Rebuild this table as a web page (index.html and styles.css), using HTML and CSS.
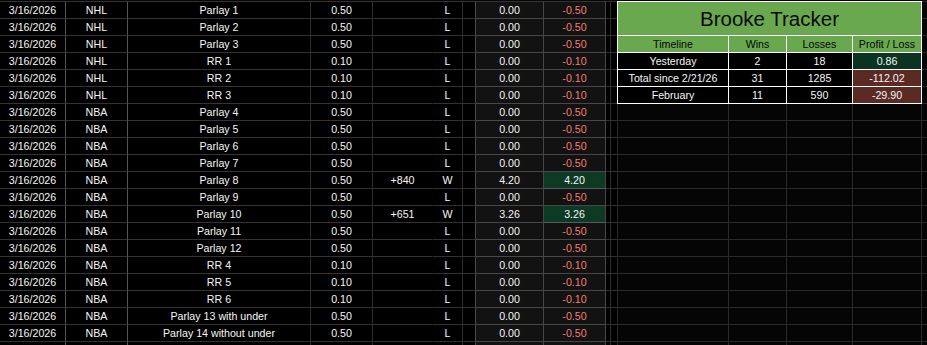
FILE: index.html
```html
<!DOCTYPE html>
<html>
<head>
<meta charset="utf-8">
<link rel="stylesheet" href="styles.css">
</head>
<body>
<div class="sheet">
  <div class="main">
    <div class="row"><div class="c date">3/16/2026</div><div class="c lg">NHL</div><div class="c bet">Parlay 1</div><div class="c stk">0.50</div><div class="c odd"></div><div class="c res">L</div><div class="c sp"></div><div class="c ret">0.00</div><div class="c pl neg">-0.50</div><div class="c e1"></div><div class="c e2"></div></div>
    <div class="row"><div class="c date">3/16/2026</div><div class="c lg">NHL</div><div class="c bet">Parlay 2</div><div class="c stk">0.50</div><div class="c odd"></div><div class="c res">L</div><div class="c sp"></div><div class="c ret">0.00</div><div class="c pl neg">-0.50</div><div class="c e1"></div><div class="c e2"></div></div>
    <div class="row"><div class="c date">3/16/2026</div><div class="c lg">NHL</div><div class="c bet">Parlay 3</div><div class="c stk">0.50</div><div class="c odd"></div><div class="c res">L</div><div class="c sp"></div><div class="c ret">0.00</div><div class="c pl neg">-0.50</div><div class="c e1"></div><div class="c e2"></div></div>
    <div class="row"><div class="c date">3/16/2026</div><div class="c lg">NHL</div><div class="c bet">RR 1</div><div class="c stk">0.10</div><div class="c odd"></div><div class="c res">L</div><div class="c sp"></div><div class="c ret">0.00</div><div class="c pl neg">-0.10</div><div class="c e1"></div><div class="c e2"></div></div>
    <div class="row"><div class="c date">3/16/2026</div><div class="c lg">NHL</div><div class="c bet">RR 2</div><div class="c stk">0.10</div><div class="c odd"></div><div class="c res">L</div><div class="c sp"></div><div class="c ret">0.00</div><div class="c pl neg">-0.10</div><div class="c e1"></div><div class="c e2"></div></div>
    <div class="row"><div class="c date">3/16/2026</div><div class="c lg">NHL</div><div class="c bet">RR 3</div><div class="c stk">0.10</div><div class="c odd"></div><div class="c res">L</div><div class="c sp"></div><div class="c ret">0.00</div><div class="c pl neg">-0.10</div><div class="c e1"></div><div class="c e2"></div></div>
    <div class="row"><div class="c date">3/16/2026</div><div class="c lg">NBA</div><div class="c bet">Parlay 4</div><div class="c stk">0.50</div><div class="c odd"></div><div class="c res">L</div><div class="c sp"></div><div class="c ret">0.00</div><div class="c pl neg">-0.50</div><div class="c e1"></div><div class="c e2"></div></div>
    <div class="row"><div class="c date">3/16/2026</div><div class="c lg">NBA</div><div class="c bet">Parlay 5</div><div class="c stk">0.50</div><div class="c odd"></div><div class="c res">L</div><div class="c sp"></div><div class="c ret">0.00</div><div class="c pl neg">-0.50</div><div class="c e1"></div><div class="c e2"></div></div>
    <div class="row"><div class="c date">3/16/2026</div><div class="c lg">NBA</div><div class="c bet">Parlay 6</div><div class="c stk">0.50</div><div class="c odd"></div><div class="c res">L</div><div class="c sp"></div><div class="c ret">0.00</div><div class="c pl neg">-0.50</div><div class="c e1"></div><div class="c e2"></div></div>
    <div class="row"><div class="c date">3/16/2026</div><div class="c lg">NBA</div><div class="c bet">Parlay 7</div><div class="c stk">0.50</div><div class="c odd"></div><div class="c res">L</div><div class="c sp"></div><div class="c ret">0.00</div><div class="c pl neg">-0.50</div><div class="c e1"></div><div class="c e2"></div></div>
    <div class="row"><div class="c date">3/16/2026</div><div class="c lg">NBA</div><div class="c bet">Parlay 8</div><div class="c stk">0.50</div><div class="c odd">+840</div><div class="c res">W</div><div class="c sp"></div><div class="c ret">4.20</div><div class="c pl win">4.20</div><div class="c e1"></div><div class="c e2"></div></div>
    <div class="row"><div class="c date">3/16/2026</div><div class="c lg">NBA</div><div class="c bet">Parlay 9</div><div class="c stk">0.50</div><div class="c odd"></div><div class="c res">L</div><div class="c sp"></div><div class="c ret">0.00</div><div class="c pl neg">-0.50</div><div class="c e1"></div><div class="c e2"></div></div>
    <div class="row"><div class="c date">3/16/2026</div><div class="c lg">NBA</div><div class="c bet">Parlay 10</div><div class="c stk">0.50</div><div class="c odd">+651</div><div class="c res">W</div><div class="c sp"></div><div class="c ret">3.26</div><div class="c pl win">3.26</div><div class="c e1"></div><div class="c e2"></div></div>
    <div class="row"><div class="c date">3/16/2026</div><div class="c lg">NBA</div><div class="c bet">Parlay 11</div><div class="c stk">0.50</div><div class="c odd"></div><div class="c res">L</div><div class="c sp"></div><div class="c ret">0.00</div><div class="c pl neg">-0.50</div><div class="c e1"></div><div class="c e2"></div></div>
    <div class="row"><div class="c date">3/16/2026</div><div class="c lg">NBA</div><div class="c bet">Parlay 12</div><div class="c stk">0.50</div><div class="c odd"></div><div class="c res">L</div><div class="c sp"></div><div class="c ret">0.00</div><div class="c pl neg">-0.50</div><div class="c e1"></div><div class="c e2"></div></div>
    <div class="row"><div class="c date">3/16/2026</div><div class="c lg">NBA</div><div class="c bet">RR 4</div><div class="c stk">0.10</div><div class="c odd"></div><div class="c res">L</div><div class="c sp"></div><div class="c ret">0.00</div><div class="c pl neg">-0.10</div><div class="c e1"></div><div class="c e2"></div></div>
    <div class="row"><div class="c date">3/16/2026</div><div class="c lg">NBA</div><div class="c bet">RR 5</div><div class="c stk">0.10</div><div class="c odd"></div><div class="c res">L</div><div class="c sp"></div><div class="c ret">0.00</div><div class="c pl neg">-0.10</div><div class="c e1"></div><div class="c e2"></div></div>
    <div class="row"><div class="c date">3/16/2026</div><div class="c lg">NBA</div><div class="c bet">RR 6</div><div class="c stk">0.10</div><div class="c odd"></div><div class="c res">L</div><div class="c sp"></div><div class="c ret">0.00</div><div class="c pl neg">-0.10</div><div class="c e1"></div><div class="c e2"></div></div>
    <div class="row"><div class="c date">3/16/2026</div><div class="c lg">NBA</div><div class="c bet">Parlay 13 with under</div><div class="c stk">0.50</div><div class="c odd"></div><div class="c res">L</div><div class="c sp"></div><div class="c ret">0.00</div><div class="c pl neg">-0.50</div><div class="c e1"></div><div class="c e2"></div></div>
    <div class="row"><div class="c date">3/16/2026</div><div class="c lg">NBA</div><div class="c bet">Parlay 14 without under</div><div class="c stk">0.50</div><div class="c odd"></div><div class="c res">L</div><div class="c sp"></div><div class="c ret">0.00</div><div class="c pl neg">-0.50</div><div class="c e1"></div><div class="c e2"></div></div>
    <div class="row"><div class="c date"></div><div class="c lg"></div><div class="c bet"></div><div class="c stk"></div><div class="c odd"></div><div class="c res"></div><div class="c sp"></div><div class="c ret"></div><div class="c pl"></div><div class="c e1"></div><div class="c e2"></div></div>
  </div>

  <div class="side">
    <div class="trk-col">
      <div class="tracker">
        <div class="t-title">Brooke Tracker</div>
        <div class="t-row t-head"><div class="t-c tl">Timeline</div><div class="t-c tw">Wins</div><div class="t-c tls">Losses</div><div class="t-c tp">Profit / Loss</div></div>
        <div class="t-row"><div class="t-c tl">Yesterday</div><div class="t-c tw">2</div><div class="t-c tls">18</div><div class="t-c tp up">0.86</div></div>
        <div class="t-row"><div class="t-c tl">Total since 2/21/26</div><div class="t-c tw">31</div><div class="t-c tls">1285</div><div class="t-c tp down">-112.02</div></div>
        <div class="t-row"><div class="t-c tl">February</div><div class="t-c tw">11</div><div class="t-c tls">590</div><div class="t-c tp down">-29.90</div></div>
      </div>
      <div class="erow"><div class="ec tl"></div><div class="ec tw"></div><div class="ec tls"></div><div class="ec tp"></div></div>
      <div class="erow"><div class="ec tl"></div><div class="ec tw"></div><div class="ec tls"></div><div class="ec tp"></div></div>
      <div class="erow"><div class="ec tl"></div><div class="ec tw"></div><div class="ec tls"></div><div class="ec tp"></div></div>
      <div class="erow"><div class="ec tl"></div><div class="ec tw"></div><div class="ec tls"></div><div class="ec tp"></div></div>
      <div class="erow"><div class="ec tl"></div><div class="ec tw"></div><div class="ec tls"></div><div class="ec tp"></div></div>
      <div class="erow"><div class="ec tl"></div><div class="ec tw"></div><div class="ec tls"></div><div class="ec tp"></div></div>
      <div class="erow"><div class="ec tl"></div><div class="ec tw"></div><div class="ec tls"></div><div class="ec tp"></div></div>
      <div class="erow"><div class="ec tl"></div><div class="ec tw"></div><div class="ec tls"></div><div class="ec tp"></div></div>
      <div class="erow"><div class="ec tl"></div><div class="ec tw"></div><div class="ec tls"></div><div class="ec tp"></div></div>
      <div class="erow"><div class="ec tl"></div><div class="ec tw"></div><div class="ec tls"></div><div class="ec tp"></div></div>
      <div class="erow"><div class="ec tl"></div><div class="ec tw"></div><div class="ec tls"></div><div class="ec tp"></div></div>
      <div class="erow"><div class="ec tl"></div><div class="ec tw"></div><div class="ec tls"></div><div class="ec tp"></div></div>
      <div class="erow"><div class="ec tl"></div><div class="ec tw"></div><div class="ec tls"></div><div class="ec tp"></div></div>
      <div class="erow"><div class="ec tl"></div><div class="ec tw"></div><div class="ec tls"></div><div class="ec tp"></div></div>
      <div class="erow"><div class="ec tl"></div><div class="ec tw"></div><div class="ec tls"></div><div class="ec tp"></div></div>
    </div>
    <div class="edge"></div>
  </div>
</div>
</body>
</html>
```

FILE: styles.css
```css
* { box-sizing: border-box; }
html, body {
  margin: 0;
  padding: 0;
  background: #050505;
  height: 345px;
  overflow: hidden;
}
.sheet {
  display: flex;
  padding-top: 1px;
  font-family: "Liberation Sans", Arial, sans-serif;
  font-size: 10.67px;
  color: #f5f5f5;
}
.main {
  width: 617px;
  flex: none;
  border-top: 1px solid #333;
}
.row {
  display: flex;
  height: 17px;
}
.c {
  height: 17px;
  line-height: 16px;
  text-align: center;
  white-space: nowrap;
  overflow: hidden;
  border-bottom: 1px solid #333;
  border-right: 1px solid #2e2e2e;
  background: #000;
}
.date { width: 66px; border-right-color: #555; }
.lg { width: 62px; border-right-color: #555; }
.bet { width: 183px; }
.stk { width: 62px; }
.odd { width: 60px; border-right-color: #000; }
.res { width: 30px; }
.sp { width: 13px; border-right-color: #4a4a4a; }
.ret { width: 68px; background: #121212; border-color: #474747; }
.pl { width: 62px; background: #121212; border-color: #474747; }
.e1 { width: 5px; }
.e2 { width: 6px; border-right: none; }
.neg { color: #f27d73; }
.win { background: #0d3a24; color: #f5f5f5; border-bottom-color: #5a5a5a; }

.side {
  display: flex;
  flex: none;
  width: 310px;
}
.trk-col {
  width: 305px;
  flex: none;
}
.tracker {
  border: 1px solid #fff;
  border-bottom: none;
}
.t-title {
  height: 34px;
  background: #6aa84f;
  border-bottom: 1px solid #fff;
  color: #080808;
  font-size: 20.5px;
  line-height: 33px;
  text-align: center;
}
.t-row {
  display: flex;
  height: 17px;
}
.t-c {
  height: 17px;
  line-height: 16px;
  text-align: center;
  white-space: nowrap;
  border-bottom: 1px solid #fff;
  border-right: 1px solid #fff;
  background: #000;
  color: #f5f5f5;
}
.t-head .t-c {
  background: #6aa84f;
  color: #050505;
}
.tracker .tl { width: 111px; }
.tl { width: 112px; }
.tw { width: 58px; }
.tls { width: 66px; }
.tp { width: 69px; }
.tracker .tp { width: 68px; border-right: none; }
.up { background: #0b3322; }
.down { background: #5a2a23; }

.erow {
  display: flex;
  height: 17px;
}
.ec {
  height: 17px;
  border-bottom: 1px solid #2a2a2a;
  border-right: 1px solid #2a2a2a;
}
.ec.tl { border-left: 1px solid #2a2a2a; }
.edge {
  width: 5px;
  flex: none;
  border-top: 1px solid #2a2a2a;
  background: repeating-linear-gradient(to bottom, transparent 0, transparent 16px, #2a2a2a 16px, #2a2a2a 17px);
}
```
